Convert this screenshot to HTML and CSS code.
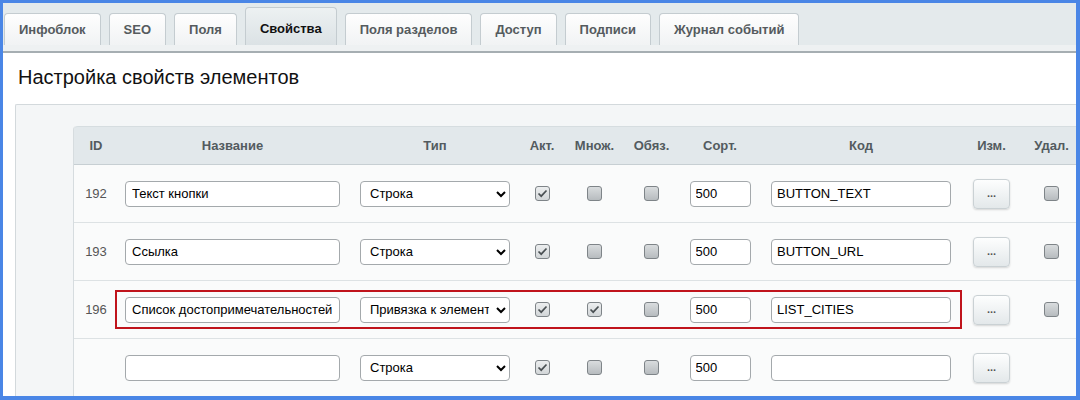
FILE: index.html
```html
<!DOCTYPE html>
<html lang="ru">
<head>
<meta charset="utf-8">
<title>Настройка свойств элементов</title>
<link rel="stylesheet" href="styles.css">
</head>
<body>
<div class="frame">
  <div class="tabbar">
    <div class="tab">Инфоблок</div>
    <div class="tab">SEO</div>
    <div class="tab">Поля</div>
    <div class="tab active">Свойства</div>
    <div class="tab">Поля разделов</div>
    <div class="tab">Доступ</div>
    <div class="tab">Подписи</div>
    <div class="tab">Журнал событий</div>
  </div>
  <div class="tabline"></div>
  <div class="content">
    <h1 class="title">Настройка свойств элементов</h1>
    <div class="box">
      <div class="tbl">
        <div class="thead grid">
          <div>ID</div>
          <div>Название</div>
          <div>Тип</div>
          <div>Акт.</div>
          <div>Множ.</div>
          <div>Обяз.</div>
          <div>Сорт.</div>
          <div>Код</div>
          <div>Изм.</div>
          <div>Удал.</div>
        </div>

        <div class="row grid">
          <div class="id">192</div>
          <div><input class="inp name" type="text" value="Текст кнопки"></div>
          <div><select class="sel"><option>Строка</option></select></div>
          <div><span class="cb on"><svg viewBox="0 0 13 13" width="13" height="13"><polyline points="2.5,6.5 5.2,9.2 10.5,3.5"/></svg></span></div>
          <div><span class="cb"></span></div>
          <div><span class="cb"></span></div>
          <div><input class="inp sort" type="text" value="500"></div>
          <div><input class="inp code" type="text" value="BUTTON_TEXT"></div>
          <div><button class="btn">...</button></div>
          <div><span class="cb"></span></div>
        </div>

        <div class="row grid">
          <div class="id">193</div>
          <div><input class="inp name" type="text" value="Ссылка"></div>
          <div><select class="sel"><option>Строка</option></select></div>
          <div><span class="cb on"><svg viewBox="0 0 13 13" width="13" height="13"><polyline points="2.5,6.5 5.2,9.2 10.5,3.5"/></svg></span></div>
          <div><span class="cb"></span></div>
          <div><span class="cb"></span></div>
          <div><input class="inp sort" type="text" value="500"></div>
          <div><input class="inp code" type="text" value="BUTTON_URL"></div>
          <div><button class="btn">...</button></div>
          <div><span class="cb"></span></div>
        </div>

        <div class="row grid marked">
          <div class="id">196</div>
          <div><input class="inp name" type="text" value="Список достопримечательностей"></div>
          <div><select class="sel"><option>Привязка к элементам</option></select></div>
          <div><span class="cb on"><svg viewBox="0 0 13 13" width="13" height="13"><polyline points="2.5,6.5 5.2,9.2 10.5,3.5"/></svg></span></div>
          <div><span class="cb on"><svg viewBox="0 0 13 13" width="13" height="13"><polyline points="2.5,6.5 5.2,9.2 10.5,3.5"/></svg></span></div>
          <div><span class="cb"></span></div>
          <div><input class="inp sort" type="text" value="500"></div>
          <div><input class="inp code" type="text" value="LIST_CITIES"></div>
          <div><button class="btn">...</button></div>
          <div><span class="cb"></span></div>
          <span class="highlight"></span>
        </div>

        <div class="row grid">
          <div class="id"></div>
          <div><input class="inp name" type="text" value=""></div>
          <div><select class="sel"><option>Строка</option></select></div>
          <div><span class="cb on"><svg viewBox="0 0 13 13" width="13" height="13"><polyline points="2.5,6.5 5.2,9.2 10.5,3.5"/></svg></span></div>
          <div><span class="cb"></span></div>
          <div><span class="cb"></span></div>
          <div><input class="inp sort" type="text" value="500"></div>
          <div><input class="inp code" type="text" value=""></div>
          <div><button class="btn">...</button></div>
          <div></div>
        </div>
      </div>
    </div>
  </div>
</div>
</body>
</html>
```

FILE: styles.css
```css
html, body {
  margin: 0;
  padding: 0;
}
body {
  background: #4a86e6;
  font-family: "Liberation Sans", Arial, sans-serif;
  width: 1080px;
  height: 400px;
  overflow: hidden;
}
.frame {
  margin: 3px 4px 0 3px;
  height: 393px;
  background: #fff;
  overflow: hidden;
}
.tabbar {
  display: flex;
  align-items: flex-end;
  gap: 8px;
  padding: 4px 0 0 1px;
  height: 38px;
  background: #e4eaec;
}
.tab {
  box-sizing: border-box;
  height: 32px;
  padding: 0 14px;
  border: 1px solid #c4ccd0;
  border-bottom: none;
  border-radius: 4px 4px 0 0;
  background: linear-gradient(#fefefe, #f1f3f4);
  font-size: 13px;
  font-weight: bold;
  line-height: 31px;
  color: #555b5e;
  white-space: nowrap;
}
.tab.active {
  height: 38px;
  padding-top: 5px;
  background: linear-gradient(#edf1f2, #dbe2e5);
  color: #111;
}
.tabline {
  height: 6px;
  background: #eef1f2;
  border-bottom: 2px solid #a6aeb2;
}
.content {
  padding-left: 12px;
}
.title {
  margin: 0;
  padding: 12px 0 0 3px;
  height: 24px;
  margin-bottom: 15px;
  font-size: 20px;
  line-height: 24px;
  font-weight: normal;
  color: #111;
}
.box {
  border-top: 1px solid #d3d9dc;
  border-left: 1px solid #d3d9dc;
  border-top-left-radius: 2px;
  background: #f4f6f7;
  padding: 21px 0 0 57px;
  height: 300px;
}
.tbl {
  width: 1004px;
  border-left: 1px solid #d6dcdf;
  border-top-left-radius: 4px;
  background: #fafbfb;
}
.grid {
  display: grid;
  grid-template-columns: 44px 229px 176px 38px 67px 47px 90px 192px 69px 51px;
  align-items: center;
  justify-items: center;
}
.grid > div {
  display: flex;
  justify-content: center;
  align-items: center;
}
.thead {
  background: #e2e8eb;
  border-top: 1px solid #d6dde0;
  border-bottom: 1px solid #c7cfd3;
  border-top-left-radius: 4px;
  box-sizing: border-box;
  height: 39px;
  font-size: 13px;
  font-weight: bold;
  color: #535b5f;
}
.row {
  position: relative;
  height: 57px;
  border-bottom: 1px solid #dde2e4;
}
.id {
  font-size: 13px;
  color: #555;
}
.inp {
  box-sizing: border-box;
  height: 26px;
  margin: 0;
  padding: 0 0 0 6px;
  border: 1px solid #a4a9ac;
  border-radius: 4px;
  background: #fff;
  font-family: "Liberation Sans", Arial, sans-serif;
  font-size: 13px;
  color: #000;
  outline: none;
}
.inp.name { width: 215px; }
.inp.sort { width: 61px; padding-left: 5px; }
.inp.code { width: 180px; padding-left: 5px; }
.sel {
  box-sizing: border-box;
  width: 150px;
  height: 26px;
  margin: 0;
  padding: 0 4px 0 5px;
  border: 1px solid #a4a9ac;
  border-radius: 4px;
  background-color: #fff;
  font-family: "Liberation Sans", Arial, sans-serif;
  font-size: 13px;
  color: #000;
}
.cb {
  box-sizing: border-box;
  display: block;
  width: 15px;
  height: 15px;
  border: 1px solid #7e8488;
  border-radius: 3px;
  background: linear-gradient(#d9dcde, #b7bcbf);
}
.cb.on {
  background: linear-gradient(#eceeef, #d2d6d8);
}
.cb svg {
  display: block;
  fill: none;
  stroke: #4a5053;
  stroke-width: 1.7;
}
.btn {
  box-sizing: border-box;
  width: 37px;
  height: 30px;
  margin: 0;
  padding: 0 0 2px;
  border: 1px solid #cad1d4;
  border-radius: 4px;
  background: linear-gradient(#fdfefe, #e3e8ea);
  box-shadow: 0 1px 2px rgba(0, 0, 0, 0.15);
  font-family: "Liberation Sans", Arial, sans-serif;
  font-size: 11px;
  font-weight: bold;
  color: #555;
}
.highlight {
  position: absolute;
  left: 41px;
  top: 9px;
  width: 847px;
  height: 39px;
  box-sizing: border-box;
  border: 2px solid #c0141c;
  pointer-events: none;
}
```
